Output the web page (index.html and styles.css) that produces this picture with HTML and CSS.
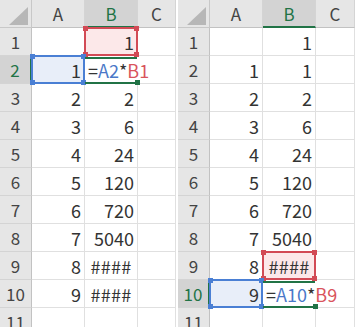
FILE: index.html
```html
<!DOCTYPE html>
<html>
<head>
<meta charset="utf-8">
<link rel="stylesheet" href="styles.css">
</head>
<body>
<div class="wrap">
  <div class="sheet left">
    <div class="corner"><span class="tri"></span></div>
    <div class="h">A</div><div class="h sel">B</div><div class="h">C</div>

    <div class="rh">1</div><div class="c"></div><div class="c ref"><i class="hl red"><b class="tl"></b><b class="tr"></b><b class="bl"></b><b class="br"></b></i><span class="v">1</span></div><div class="c"></div>
    <div class="rh sel">2</div><div class="c ref"><i class="hl blue"><b class="tl"></b><b class="tr"></b><b class="bl"></b><b class="br"></b></i><span class="v">1</span></div><div class="c f"><i class="act"><b class="br"></b></i><span class="v">=<span class="fb">A2</span>*<span class="fr">B1</span></span></div><div class="c"></div>
    <div class="rh">3</div><div class="c">2</div><div class="c">2</div><div class="c"></div>
    <div class="rh">4</div><div class="c">3</div><div class="c">6</div><div class="c"></div>
    <div class="rh">5</div><div class="c">4</div><div class="c">24</div><div class="c"></div>
    <div class="rh">6</div><div class="c">5</div><div class="c">120</div><div class="c"></div>
    <div class="rh">7</div><div class="c">6</div><div class="c">720</div><div class="c"></div>
    <div class="rh">8</div><div class="c">7</div><div class="c">5040</div><div class="c"></div>
    <div class="rh">9</div><div class="c">8</div><div class="c hash">####</div><div class="c"></div>
    <div class="rh">10</div><div class="c">9</div><div class="c hash">####</div><div class="c"></div>
    <div class="rh">11</div><div class="c"></div><div class="c"></div><div class="c"></div>
  </div>

  <div class="sheet right">
    <div class="corner"><span class="tri"></span></div>
    <div class="h">A</div><div class="h sel">B</div><div class="h">C</div>

    <div class="rh">1</div><div class="c"></div><div class="c">1</div><div class="c"></div>
    <div class="rh">2</div><div class="c">1</div><div class="c">1</div><div class="c"></div>
    <div class="rh">3</div><div class="c">2</div><div class="c">2</div><div class="c"></div>
    <div class="rh">4</div><div class="c">3</div><div class="c">6</div><div class="c"></div>
    <div class="rh">5</div><div class="c">4</div><div class="c">24</div><div class="c"></div>
    <div class="rh">6</div><div class="c">5</div><div class="c">120</div><div class="c"></div>
    <div class="rh">7</div><div class="c">6</div><div class="c">720</div><div class="c"></div>
    <div class="rh">8</div><div class="c">7</div><div class="c">5040</div><div class="c"></div>
    <div class="rh">9</div><div class="c">8</div><div class="c ref hash"><i class="hl red"><b class="tl"></b><b class="tr"></b><b class="bl"></b><b class="br"></b></i><span class="v">####</span></div><div class="c"></div>
    <div class="rh sel">10</div><div class="c ref"><i class="hl blue"><b class="tl"></b><b class="tr"></b><b class="bl"></b><b class="br"></b></i><span class="v">9</span></div><div class="c f"><i class="act"><b class="br"></b></i><span class="v">=<span class="fb">A10</span>*<span class="fr">B9</span></span></div><div class="c"></div>
    <div class="rh">11</div><div class="c"></div><div class="c"></div><div class="c"></div>
  </div>
</div>
</body>
</html>
```

FILE: styles.css
```css
html, body {
  margin: 0;
  padding: 0;
  background: #ffffff;
}
.wrap {
  display: flex;
  gap: 2px;
  width: 355px;
  height: 327px;
  overflow: hidden;
  font-family: "Noto Sans CJK JP", "Noto Sans", sans-serif;
}
.sheet {
  display: grid;
  grid-auto-rows: 28px;
  overflow: hidden;
  height: 327px;
}
.left { grid-template-columns: 32px 53px 53px 38px; width: 176px; }
.right { grid-template-columns: 32px 53px 53px 39px; width: 177px; }

.corner {
  background: #e6e6e6;
  border-right: 1px solid #c8c8c8;
  border-bottom: 1px solid #c8c8c8;
  box-sizing: border-box;
  position: relative;
}
.tri {
  position: absolute;
  right: 3px;
  bottom: 2px;
  width: 0;
  height: 0;
  border-left: 19px solid transparent;
  border-bottom: 18px solid #b7b7b7;
}
.h {
  background: #e6e6e6;
  color: #444;
  font-size: 17px;
  line-height: 28px;
  text-align: center;
  border-right: 1px solid #d4d4d4;
  border-bottom: 1px solid #c2c2c2;
  box-sizing: border-box;
}
.h.sel {
  background: #d3d3d3;
  color: #217346;
  border-bottom: 2px solid #217346;
  line-height: 27px;
}
.rh {
  background: #e6e6e6;
  color: #444;
  font-size: 17px;
  line-height: 28px;
  text-align: center;
  border-right: 1px solid #c2c2c2;
  border-bottom: 1px solid #d4d4d4;
  box-sizing: border-box;
}
.rh.sel {
  background: #d3d3d3;
  color: #217346;
  border-right: 2px solid #217346;
}
.c {
  position: relative;
  color: #333;
  font-size: 18px;
  line-height: 28px;
  text-align: right;
  padding-right: 3px;
  border-right: 1px solid #e0e0e0;
  border-bottom: 1px solid #e0e0e0;
  box-sizing: border-box;
  white-space: nowrap;
}
.c.hash {
  text-align: center;
  padding-right: 0;
  letter-spacing: 0.3px;
}
.c .v {
  position: relative;
  z-index: 3;
}
.c.f {
  text-align: left;
  padding-left: 3px;
  padding-right: 0;
  overflow: visible;
  z-index: 4;
  border-right-color: transparent;
}
.fb { color: #4a78c8; }
.fr { color: #d9545c; }

.hl {
  position: absolute;
  left: -1px;
  top: -1px;
  right: -1px;
  bottom: -1px;
  border: 2px solid;
  z-index: 2;
}
.hl.red { border-color: #d24a55; background: #fce8e9; }
.hl.blue { border-color: #4a7fd4; background: #e8eef9; }
.hl b, .act b {
  position: absolute;
  width: 5px;
  height: 5px;
}
.hl.red b { background: #d24a55; }
.hl.blue b { background: #4a7fd4; }
.hl .tl { left: -3px; top: -3px; }
.hl .tr { right: -3px; top: -3px; }
.hl .bl { left: -3px; bottom: -3px; }
.hl .br { right: -3px; bottom: -3px; }

.act {
  position: absolute;
  left: 0;
  right: 0;
  top: 1px;
  bottom: -1px;
  border-top: 2px solid #217346;
  border-bottom: 2px solid #217346;
  z-index: 1;
}
.act b { background: #217346; right: -3px; bottom: -3px; }
```
